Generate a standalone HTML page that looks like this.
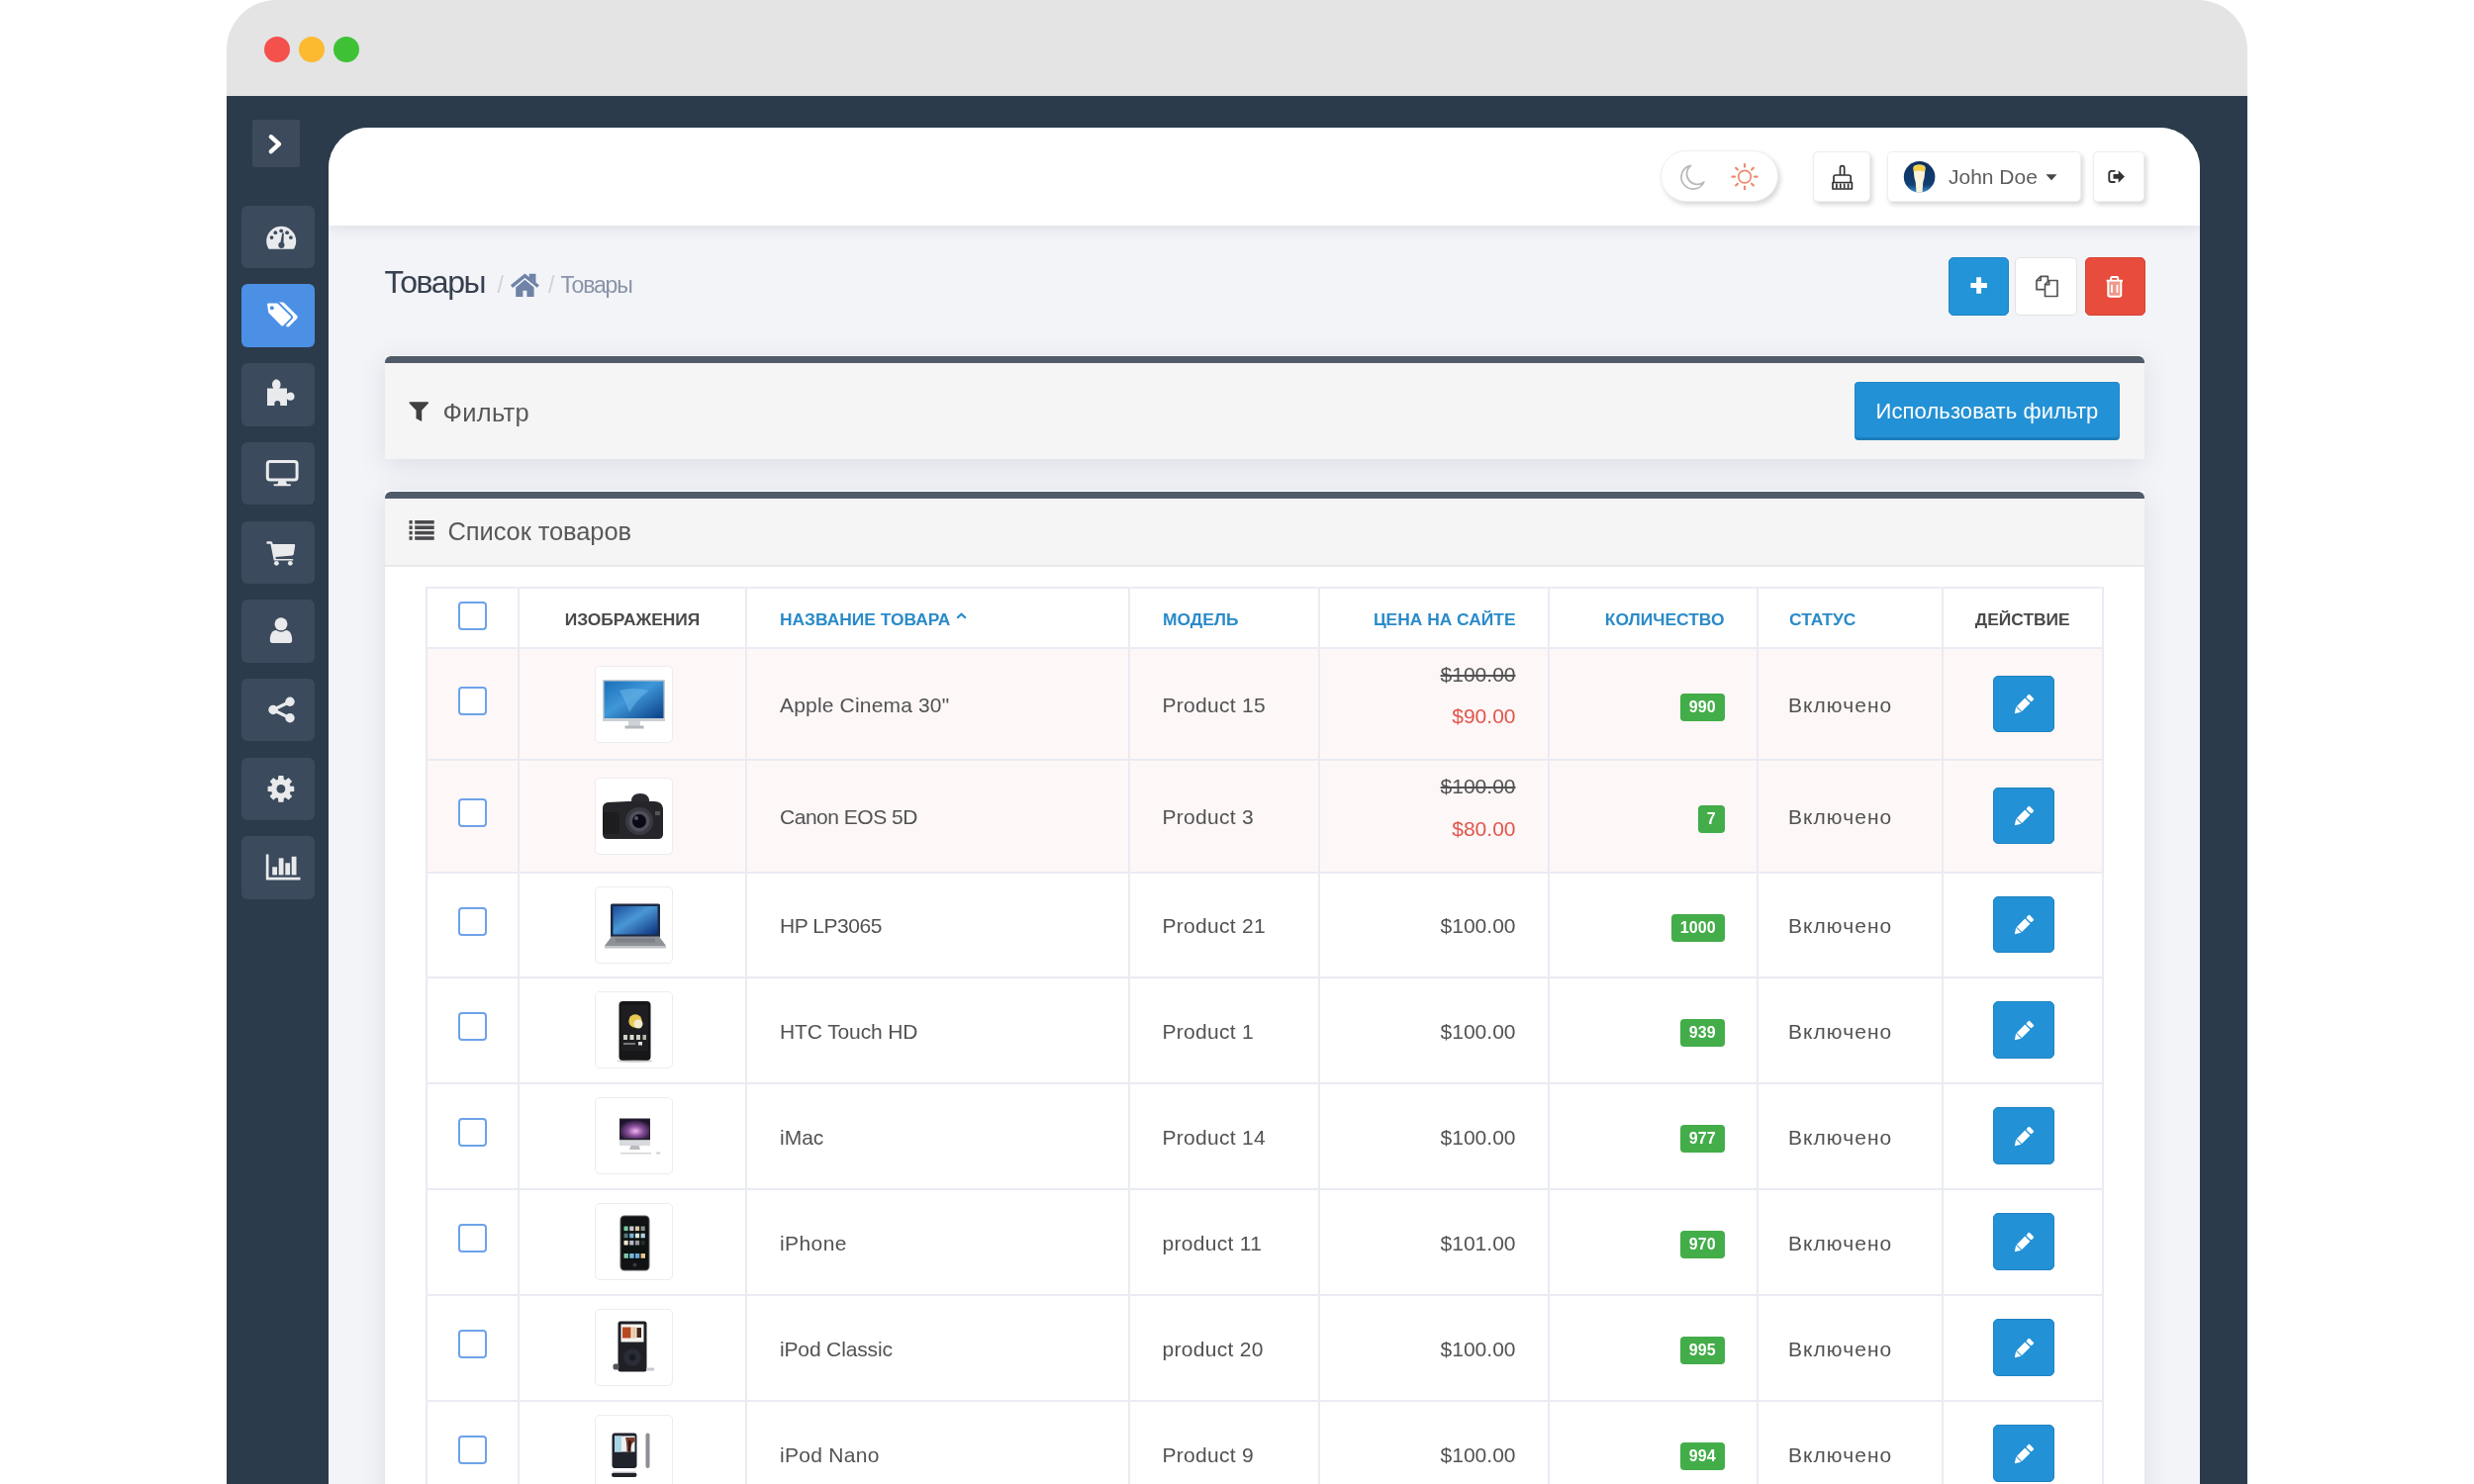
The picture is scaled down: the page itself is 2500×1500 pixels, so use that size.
<!DOCTYPE html>
<html lang="ru">
<head>
<meta charset="utf-8">
<title>Товары</title>
<style>
*{box-sizing:border-box;margin:0;padding:0}
html,body{width:2500px;height:1500px;overflow:hidden;background:#fff}
body{position:relative;font-family:"Liberation Sans",sans-serif;color:#4f4f4f;font-size:21px}
.abs{position:absolute}
/* window */
#win{position:absolute;left:229px;top:0;width:2042px;height:1560px;background:#e4e4e4;border-radius:50px 50px 0 0;overflow:hidden;filter:blur(.75px)}
.dot{position:absolute;top:36.5px;width:26px;height:26px;border-radius:50%}
#app{position:absolute;left:0;top:97.3px;width:2042px;height:1460px;background:#2c3b4c}
/* sidebar */
#tog{position:absolute;left:25.5px;top:24px;width:48px;height:48px;background:#3c4a5b;border-radius:2px}
.sb{position:absolute;left:14.5px;width:74.5px;height:63.5px;background:#3b4a5c;border-radius:6px}
.sb.act{background:#4c90e6}
.sb svg,#tog svg{position:absolute;left:0;top:0;width:100%;height:100%}
/* panel */
#panel{position:absolute;left:103px;top:31.800px;width:1891px;height:1460px;background:#f3f4f8;border-radius:41px 41px 0 0;overflow:hidden}
#hdr{position:absolute;left:0;top:0;width:100%;height:99px;background:#fff;box-shadow:0 2px 14px rgba(60,70,100,.13)}
.hb{position:absolute;top:23.5px;height:51px;background:#fff;border:1px solid #eeeeee;border-radius:5px;box-shadow:2px 3px 5px rgba(0,0,0,.16)}
/* page coords inside panel: subtract (332,129) */
h1{position:absolute;left:56.5px;top:135.9px;font-size:32px;font-weight:400;color:#37404f;letter-spacing:-1.4px;line-height:40px;white-space:nowrap}
.bc{position:absolute;top:146px;font-size:23px;color:#8a93a6;line-height:26px;white-space:nowrap;letter-spacing:-1.17px}
.btn{position:absolute;border-radius:5px}
.card{position:absolute;left:57px;width:1778px;box-shadow:0 6px 26px rgba(70,80,110,.13)}
.card .bar{position:absolute;left:0;top:.5px;width:100%;height:7.9px;background:#505b6a;border-radius:6px 6px 0 0}
.ph{font-size:25.5px;color:#585858;letter-spacing:.1px;white-space:nowrap;line-height:30px}
/* table */
#tbl{position:absolute;left:41px;top:97.1px;width:1695px;border-collapse:collapse;table-layout:fixed}
#tbl td,#tbl th{border:2px solid #eaebf3;vertical-align:middle;white-space:nowrap;overflow:hidden}
#tbl th{height:61.2px;font-size:17.4px;font-weight:700;color:#2a8bc9;text-transform:uppercase;text-align:left;padding:4px 32px 0 33px}
#tbl td{padding:2.6px 32px 0 33px;font-size:21px;color:#525252}
#tbl tr.sp td{background:#fef7f7}
#tbl td.st{letter-spacing:1.05px;padding-left:30.5px}
#tbl td.md{letter-spacing:.3px;padding-left:32.500px}
#tbl td.pr{letter-spacing:0}
.r{text-align:right !important}
.c{text-align:center !important}
.cb{display:block;width:29px;height:29px;border:2.5px solid #6da2ea;border-radius:4px;background:#fff;margin:0 auto;position:relative;top:-3.5px}
.th{display:block;width:78.5px;height:78px;margin:0 auto;left:1.7px;background:#fff;border:1px solid #ececec;border-radius:5px;position:relative;overflow:hidden}
.th svg{position:absolute;left:0;top:0;width:78px;height:78px}
.bd{display:inline-block;height:28px;line-height:28px;padding:0 8.6px 0 8.8px;background:#43ad49;color:#fff;font-size:16px;font-weight:700;border-radius:4px;position:relative;top:1.7px;letter-spacing:.15px}
.ed{display:block;width:62px;height:57.6px;margin:0 auto;background:#2391d5;border-radius:5px;position:relative;left:1px;top:-.3px;border:1px solid #1f83c2}
.ed svg{position:absolute;left:16.1px;top:15.6px;width:27px;height:27px}
.old{display:block;text-decoration:line-through;line-height:26px;margin-bottom:17px;position:relative;top:-9.9px}
.new{display:block;color:#e0564c;line-height:26px;position:relative;top:-10.1px}
</style>
</head>
<body>
<div id="win">
  <div class="dot" style="left:38px;background:#f4514c"></div>
  <div class="dot" style="left:73px;background:#fbba2f"></div>
  <div class="dot" style="left:108px;background:#3fc136"></div>
  <div id="app">
    <div id="tog"><svg viewBox="0 0 48 48" width="48" height="48" ><path d="M18.800 17.200 L27 24.700 L18.800 32.200" fill="none" stroke="#fff" stroke-width="4.300" stroke-linecap="round" stroke-linejoin="round"/></svg></div>
    <div class="sb" style="top:110.5px" id="sb0"><svg viewBox="0 0 74.5 63.5" width="74.5" height="63.5" ><path d="M25.2 35.8a15 15 0 0 1 30 0c0 2.6-.7 5-1.9 7.1q-.5.9-1.6.9h-23q-1.1 0-1.6-.9c-1.2-2.1-1.900-4.5-1.900-7.100z" fill="#e9eaec"/><circle cx="30.5" cy="32.1" r="1.9" fill="#3b4a5c"/><circle cx="34.3" cy="27.2" r="1.9" fill="#3b4a5c"/><circle cx="40.2" cy="25.3" r="1.9" fill="#3b4a5c"/><circle cx="46.1" cy="27.2" r="1.9" fill="#3b4a5c"/><circle cx="49.9" cy="32.1" r="1.9" fill="#3b4a5c"/><path d="M38.6 41.600 L41.300 27.200 L42.800 27.500 L42.400 41.800z" fill="#3b4a5c"/><circle cx="40.4" cy="39.8" r="3.1" fill="#3b4a5c"/></svg></div>
    <div class="sb act" style="top:190.2px" id="sb1"><svg viewBox="0 0 74.5 63.5" width="74.5" height="63.5" ><g transform="translate(30.900 18.600)"><path d="M0 2.2q0-2.200 2.200-2.200h8.300q1.200 0 2.100.9l12.600 12.600q1.500 1.500 0 3l-7.700 7.700q-1.500 1.500-3 0l-12.600-12.600q-.9-.9-.9-2.100z" fill="#fff"/></g><g transform="translate(25.2 18.600)"><path d="M0 2.2q0-2.200 2.200-2.200h8.300q1.200 0 2.100.9l12.600 12.600q1.500 1.500 0 3l-7.700 7.700q-1.500 1.500-3 0l-12.600-12.600q-.9-.9-.9-2.100z" fill="#fff" stroke="#4c90e6" stroke-width="1.800"/><circle cx="5.6" cy="5.600" r="2" fill="#4c90e6"/></g></svg></div>
    <div class="sb" style="top:269.9px" id="sb2"><svg viewBox="0 0 74.5 63.5" width="74.5" height="63.5" ><path d="M26 25.500h6.300q-1.300-1.900-1.300-3.600c0-3 1.900-5.400 4.300-5.400s4.300 2.400 4.300 5.400q0 1.700-1.300 3.600h7.700v5.600q1.600-1.500 3.400-1.500c2.500 0 4.200 1.700 4.200 4.100s-1.700 4.100-4.200 4.100q-1.800 0-3.400-1.500v6.800h-6.800v-2.300q0-2.800-2.900-2.800t-2.900 2.800v2.300h-7.400z" fill="#e9eaec"/></svg></div>
    <div class="sb" style="top:349.6px" id="sb3"><svg viewBox="0 0 74.5 63.5" width="74.5" height="63.5" ><rect x="26.3" y="19.6" width="29.800" height="18.400" rx="2.600" fill="none" stroke="#e9eaec" stroke-width="3"/><path d="M37.500 39h7.400l1 3.200h3.100q1 0 1 1t-1 1h-15.600q-1 0-1-1t1-1h3.100z" fill="#e9eaec"/></svg></div>
    <div class="sb" style="top:429.3px" id="sb4"><svg viewBox="0 0 74.5 63.5" width="74.5" height="63.5" ><path d="M25.500 20.300h4.300q1.200 0 1.500 1.200l.4 1.500h21.300q1.400 0 1.200 1.400l-1.400 8.700q-.2 1.200-1.400 1.300l-17 1.600.4 1.900h16.500q1 0 1 1.100v.6h-19.600l-3.300-16.900h-3.900z" fill="#e9eaec"/><circle cx="35.400" cy="42.300" r="2.400" fill="#e9eaec"/><circle cx="49.300" cy="42.300" r="2.400" fill="#e9eaec"/></svg></div>
    <div class="sb" style="top:509px" id="sb5"><svg viewBox="0 0 74.5 63.5" width="74.5" height="63.5" ><circle cx="40" cy="24.800" r="6.500" fill="#e9eaec"/><path d="M28.800 41.300c0-6.300 2.300-10.300 6.300-10.300q2.300 1.800 4.900 1.800t4.900-1.800c4 0 6.300 4 6.300 10.300q0 2.800-3.200 2.800h-16q-3.200 0-3.200-2.800z" fill="#e9eaec"/></svg></div>
    <div class="sb" style="top:588.7px" id="sb6"><svg viewBox="0 0 74.5 63.5" width="74.5" height="63.5" ><path d="M32 31.500L49 23.200M32 31.500L49 39.900" stroke="#e9eaec" stroke-width="3.200" fill="none"/><circle cx="32" cy="31.500" r="4.700" fill="#e9eaec"/><circle cx="49" cy="23.300" r="4.700" fill="#e9eaec"/><circle cx="49" cy="39.800" r="4.700" fill="#e9eaec"/></svg></div>
    <div class="sb" style="top:668.4px" id="sb7"><svg viewBox="0 0 74.5 63.5" width="74.5" height="63.5" ><polygon points="52.64,29.38 52.64,33.42 49.00,33.74 47.99,36.18 50.34,38.98 47.48,41.84 44.68,39.49 42.24,40.50 41.92,44.14 37.88,44.14 37.56,40.50 35.12,39.49 32.32,41.84 29.46,38.98 31.81,36.18 30.80,33.74 27.16,33.42 27.16,29.38 30.80,29.06 31.81,26.62 29.46,23.82 32.32,20.96 35.12,23.31 37.56,22.30 37.88,18.66 41.92,18.66 42.24,22.30 44.68,23.31 47.48,20.96 50.34,23.82 47.99,26.62 49.00,29.06" fill="#e9eaec" stroke="#e9eaec" stroke-width="1.2" stroke-linejoin="round"/><circle cx="39.9" cy="31.4" r="4.4" fill="#3b4a5c"/></svg></div>
    <div class="sb" style="top:748.1px" id="sb8"><svg viewBox="0 0 74.5 63.5" width="74.5" height="63.5" ><path d="M24.800 18.400h2.700v23.400h32v2.700h-34.700z" fill="#e9eaec"/><rect x="31.200" y="31.300" width="4.800" height="8.100" fill="#e9eaec"/><rect x="37.700" y="22.400" width="4.800" height="17" fill="#e9eaec"/><rect x="44.300" y="27.300" width="4.800" height="12.100" fill="#e9eaec"/><rect x="50.700" y="20.800" width="4.800" height="18.600" fill="#e9eaec"/></svg></div>
    <div id="panel">
      <div id="hdr">
        <div class="hb" id="pill" style="left:1346px;width:119px;height:52px;top:23px;border-radius:26px"><svg viewBox="0 0 119 52" width="119" height="52" style="position:absolute;left:-1px;top:-1px"><path d="M30.500 15.300a12 12 0 1 0 13.400 16.700a10.500 10.500 0 0 1-13.400-16.700z" fill="none" stroke="#b9b9b9" stroke-width="1.700" stroke-linejoin="round"/><circle cx="85" cy="26.600" r="6.300" fill="none" stroke="#ec8a6e" stroke-width="1.700"/><g stroke="#ec8a6e" stroke-width="2.200" stroke-linecap="round"><line x1="95.00" y1="26.60" x2="97.60" y2="26.60"/><line x1="92.07" y1="33.67" x2="93.91" y2="35.51"/><line x1="85.00" y1="36.60" x2="85.00" y2="39.20"/><line x1="77.93" y1="33.67" x2="76.09" y2="35.51"/><line x1="75.00" y1="26.60" x2="72.40" y2="26.60"/><line x1="77.93" y1="19.53" x2="76.09" y2="17.69"/><line x1="85.00" y1="16.60" x2="85.00" y2="14.00"/><line x1="92.07" y1="19.53" x2="93.91" y2="17.69"/></g></svg></div>
        <div class="hb" id="broom" style="left:1499.5px;width:58px"><svg viewBox="0 0 58 51" width="58" height="51" style="position:absolute;left:-1px;top:-1px"><g fill="none" stroke="#333" stroke-width="1.700" stroke-linejoin="round"><path d="M27.500 24v-7.300q0-2 2.100-2t2.100 2v7.300"/><path d="M21 31.500v-5.500q0-2 2-2h13.200q2 0 2 2v5.500"/><path d="M20 31.500h19.400v6.500h-19.400z"/><path d="M23.900 32.500v5M27.800 32.500v5M31.700 32.500v5M35.600 32.500v5"/></g></svg></div>
        <div class="hb" id="user" style="left:1574.5px;width:196px"><svg viewBox="0 0 196 51" width="196" height="51" style="position:absolute;left:-1px;top:-1px"><defs><clipPath id="av"><circle cx="32.600" cy="25.800" r="15.800"/></clipPath><linearGradient id="avg" x1="0" y1="0" x2="0" y2="1"><stop offset="0" stop-color="#0d2f5c"/><stop offset=".75" stop-color="#123f73"/><stop offset="1" stop-color="#3c8fd0"/></linearGradient></defs><circle cx="32.600" cy="25.800" r="15.800" fill="url(#avg)"/><g clip-path="url(#av)"><path d="M26.500 16.500q0-3 6-3t6 3l-.8 9q-.4 3-1.400 5.500l-.8 11h-6l-.8-11q-1-2.500-1.400-5.500z" fill="#fbf3dc"/><path d="M26.500 17q0-3.500 6-3.500t6 3.500l-.3 3.500q-5.700-2-11.400 0z" fill="#f5d04a"/></g><path d="M160.500 23.300h11l-5.500 5.900z" fill="#444"/></svg><span style="position:absolute;left:61.5px;top:11px;font-size:21px;line-height:28px;color:#5e5e5e;letter-spacing:0;white-space:nowrap">John Doe</span></div>
        <div class="hb" id="logout" style="left:1783px;width:52px"><svg viewBox="0 0 52 51" width="52" height="51" style="position:absolute;left:-1px;top:-1px"><g transform="translate(23.6 25.7) scale(.86) translate(-23.6 -25.7)"><path d="M21.500 18.900h-3.400q-3 0-3 3v7q0 3 3 3h3.400" fill="none" stroke="#333" stroke-width="2.200" stroke-linecap="round"/><path d="M20 22.700h6v-4.600l7.300 7.300-7.300 7.300v-4.600h-6z" fill="#333"/></g></svg></div>
      </div>
      <h1>Товары</h1>
      <div class="bc" style="left:170.5px;color:#cfd2db;letter-spacing:0">/</div>
      <div class="abs" style="left:182px;top:146px;width:34px;height:28px"><svg viewBox="0 0 34 28" width="34" height="28" ><g transform="translate(-182 -146)"><path d="M185 160.600L198.400 149.600L204.400 154.500V149.400h3.400v7.900L211.800 160.600" fill="none" stroke="#6f83a7" stroke-width="3.300" stroke-linejoin="miter"/><path d="M189.200 161.400L198.400 153.800L207.600 161.400V171H200.400V164.800H196.400V171H189.200z" fill="#6f83a7"/></g></svg></div>
      <div class="bc" style="left:222px;color:#cfd2db;letter-spacing:0">/</div>
      <div class="bc" style="left:234.5px">Товары</div>
      <div class="btn" id="badd" style="left:1637px;top:131px;width:61px;height:59px;background:#2394d7;border:1px solid #1d84c4"><svg viewBox="0 0 61 59" width="61" height="59" style="position:absolute;left:-1px;top:-1px"><path d="M28.200 20.200h4.900v5.800h5.800v4.900h-5.800v5.900h-4.900v-5.900h-5.800v-4.900h5.800z" fill="#fff"/></svg></div>
      <div class="btn" id="bcopy" style="left:1704px;top:131px;width:63px;height:59px;background:#fff;border:1px solid #e2e2e2"><svg viewBox="0 0 63 59" width="63" height="59" style="position:absolute;left:-1px;top:-1px"><g fill="#fff" stroke="#555" stroke-width="1.700" stroke-linejoin="round"><path d="M22 23.500l4.200-4.200h7.200v13.400h-11.400z"/><path d="M22 23.500h4.200v-4.200" fill="none"/><path d="M30.500 27.700l4.200-4.200h8.300v16h-12.500z"/><path d="M30.500 27.700h4.200v-4.200" fill="none"/></g></svg></div>
      <div class="btn" id="bdel" style="left:1775px;top:131px;width:61px;height:59px;background:#e74c3c;border:1px solid #d64233"><svg viewBox="0 0 61 59" width="61" height="59" style="position:absolute;left:-1px;top:-1px"><g fill="none" stroke="#fff" stroke-width="2"><path d="M21.600 23.700h16.400"/><path d="M26.200 23.300v-2.300q0-1 1-1h5q1 0 1 1v2.300"/><path d="M23.300 24v13.700q0 2 2 2h9q2 0 2-2v-13.700" fill="#f6d6c9" fill-opacity=".55"/><path d="M27 27.800v8M32.500 27.800v8" stroke-width="1.800"/></g></svg></div>

      <div class="card" id="c1" style="top:230px;height:105px;background:#f5f5f6">
        <div class="bar"></div>
        <div class="abs" style="left:23px;top:46px;width:24px;height:24px"><svg viewBox="0 0 24 24" width="24" height="24" ><g transform="translate(-23 -46)"><path d="M25.100 47.200h18.200q1.300.3.500 1.500l-6.600 7v11.300l-5.700-2.900v-8.400l-6.700-7q-.9-1.200.3-1.500z" fill="#404040"/></g></svg></div>
        <div class="ph abs" style="left:58.5px;top:42.6px;letter-spacing:.3px">Фильтр</div>
        <div class="abs" style="left:1485px;top:27px;width:268px;height:58.5px;background:#2391d5;border-radius:4px;color:#fff;font-size:22px;line-height:58px;text-align:center;letter-spacing:.1px;border:1px solid #1f86c8;border-bottom:3px solid #1b7dba">Использовать фильтр</div>
      </div>

      <div class="card" id="c2" style="top:367px;height:1100px;background:#fff">
        <div class="bar"></div>
        <div class="abs" style="left:0;top:9px;width:100%;height:67.5px;background:#f5f5f6;border-bottom:2px solid #e9e9ea"></div>
        <div class="abs" style="left:22px;top:28px;width:30px;height:24px"><svg viewBox="0 0 30 24" width="30" height="24" ><g transform="translate(-22 -28)" fill="#4a4a4e"><rect x="24.500" y="30.0" width="3.200" height="3.600"/><rect x="30.200" y="30.0" width="19.500" height="3.600"/><rect x="24.500" y="35.4" width="3.200" height="3.600"/><rect x="30.200" y="35.4" width="19.500" height="3.600"/><rect x="24.500" y="40.8" width="3.200" height="3.600"/><rect x="30.200" y="40.8" width="19.500" height="3.600"/><rect x="24.500" y="46.2" width="3.200" height="3.600"/><rect x="30.200" y="46.2" width="19.500" height="3.600"/></g></svg></div>
        <div class="ph abs" style="left:63.5px;top:26.2px;letter-spacing:-.1px">Список товаров</div>
        <table id="tbl">
          <colgroup><col style="width:93px"><col style="width:230px"><col style="width:387px"><col style="width:192px"><col style="width:231.5px"><col style="width:211px"><col style="width:187px"><col style="width:162.5px"></colgroup>
          <tr><th class="c" style="padding:0"><span class="cb" style="top:-2.7px"></span></th><th class="c" style="color:#4a4a4a;padding-left:0;padding-right:0">Изображения</th><th>Название товара<svg width="11" height="7" viewBox="0 0 11 7" style="margin-left:5.5px;position:relative;top:-6.5px"><path d="M1.2 5.800L5.500 1.700L9.800 5.800" fill="none" stroke="#2a8bc9" stroke-width="2.200"/></svg></th><th>Модель</th><th class="r">Цена на сайте</th><th class="r">Количество</th><th style="padding-left:31.5px">Статус</th><th class="c" style="color:#4a4a4a;padding-left:0;padding-right:0">Действие</th></tr>
<tr class="sp" style="height:112.6px"><td style="padding:0"><span class="cb"></span></td><td style="padding:0"><span class="th"><svg viewBox="0 0 78 78" width="78" height="78" ><defs><linearGradient id="g1" x1="0" y1="0" x2="1" y2="1"><stop offset="0" stop-color="#1b6fb8"/><stop offset=".45" stop-color="#3f97d8"/><stop offset="1" stop-color="#0a3f86"/></linearGradient></defs><rect x="7" y="13" width="63" height="42" fill="#c9ced4"/><rect x="8.500" y="14.500" width="60" height="37.500" fill="url(#g1)"/><path d="M24 24q14-4 30 0-12 8-20 22-4-12-10-22z" fill="#6cb6ea" opacity=".55"/><rect x="33" y="55" width="12" height="5" fill="#cfd2d6"/><rect x="29.500" y="59.500" width="19" height="3" fill="#b5b8bc"/></svg></span></td><td class="nm" style="font-size:21px;letter-spacing:0.175px">Apple Cinema 30"</td><td class="md">Product 15</td><td class="r pr"><span class="old">$100.00</span><span class="new">$90.00</span></td><td class="r"><span class="bd">990</span></td><td class="st">Включено</td><td style="padding:0"><span class="ed"><svg viewBox="0 0 22 22" width="22" height="22" ><g transform="rotate(45 11 11)" fill="#fff"><rect x="8" y="1.200" width="6" height="3.600" rx="1"/><rect x="8" y="6" width="6" height="9.600"/><path d="M8 16.400h6l-3 4.600z"/></g></svg></span></td></tr>
<tr class="sp" style="height:113.8px"><td style="padding:0"><span class="cb"></span></td><td style="padding:0"><span class="th"><svg viewBox="0 0 78 78" width="78" height="78" ><path d="M36 23q0-8 9-8t9 8v3h-18z" fill="#2b2b2f"/><path d="M7 30q0-5 5-6l21-1h26q8 0 9 7v26q0 5-5 5h-51q-5 0-5-5z" fill="#26262a"/><rect x="7" y="34" width="17" height="22" rx="3" fill="#1d1d20"/><circle cx="44" cy="43" r="14" fill="#3a3a42"/><circle cx="44" cy="43" r="10.500" fill="#50505c"/><circle cx="44" cy="43" r="7" fill="#0a0914"/><circle cx="41" cy="40" r="2" fill="#55556a"/><rect x="60" y="33" width="5" height="4" fill="#555"/></svg></span></td><td class="nm" style="font-size:21px;letter-spacing:-0.48px">Canon EOS 5D</td><td class="md">Product 3</td><td class="r pr"><span class="old">$100.00</span><span class="new">$80.00</span></td><td class="r"><span class="bd">7</span></td><td class="st">Включено</td><td style="padding:0"><span class="ed"><svg viewBox="0 0 22 22" width="22" height="22" ><g transform="rotate(45 11 11)" fill="#fff"><rect x="8" y="1.200" width="6" height="3.600" rx="1"/><rect x="8" y="6" width="6" height="9.600"/><path d="M8 16.400h6l-3 4.600z"/></g></svg></span></td></tr>
<tr style="height:106.3px"><td style="padding:0"><span class="cb"></span></td><td style="padding:0"><span class="th"><svg viewBox="0 0 78 78" width="78" height="78" ><defs><linearGradient id="g2" x1="0" y1="0" x2="1" y2="1"><stop offset="0" stop-color="#1a4c9a"/><stop offset=".45" stop-color="#4a97d6"/><stop offset="1" stop-color="#0c2f7a"/></linearGradient></defs><rect x="15" y="16.500" width="50" height="34" rx="1.500" fill="#1c2a44"/><rect x="17.500" y="19" width="45" height="28.500" fill="url(#g2)"/><path d="M9 59l7-9.500h48l7 9.500z" fill="#8e9196"/><rect x="9" y="59" width="62" height="2.500" fill="#bfc2c6"/><rect x="20" y="51.500" width="40" height="4" fill="#7d8086"/></svg></span></td><td class="nm" style="font-size:21px;letter-spacing:-0.44px">HP LP3065</td><td class="md">Product 21</td><td class="r pr">$100.00</td><td class="r"><span class="bd">1000</span></td><td class="st">Включено</td><td style="padding:0"><span class="ed"><svg viewBox="0 0 22 22" width="22" height="22" ><g transform="rotate(45 11 11)" fill="#fff"><rect x="8" y="1.200" width="6" height="3.600" rx="1"/><rect x="8" y="6" width="6" height="9.600"/><path d="M8 16.400h6l-3 4.600z"/></g></svg></span></td></tr>
<tr style="height:106.8px"><td style="padding:0"><span class="cb"></span></td><td style="padding:0"><span class="th"><svg viewBox="0 0 78 78" width="78" height="78" ><rect x="23.500" y="9" width="32" height="60" rx="4" fill="#17171a"/><rect x="26" y="13" width="27" height="46" fill="#1e1e22"/><circle cx="40" cy="29" r="6.700" fill="#e9c851"/><circle cx="43" cy="32" r="4.500" fill="#f3ead0"/><rect x="28" y="43" width="4" height="5" fill="#cfcfc8"/><rect x="34.500" y="43" width="4" height="5" fill="#dcdcd4"/><rect x="41" y="43" width="4" height="5" fill="#cfcfc8"/><rect x="47.500" y="43" width="3.500" height="5" fill="#b8b8a8"/><rect x="28" y="51" width="12" height="2" fill="#777"/><rect x="43" y="50" width="4" height="3.500" fill="#ddd"/><ellipse cx="39.500" cy="69.500" rx="18" ry="1.500" fill="#999" opacity=".5"/></svg></span></td><td class="nm" style="font-size:21px;letter-spacing:-0.12px">HTC Touch HD</td><td class="md">Product 1</td><td class="r pr">$100.00</td><td class="r"><span class="bd">939</span></td><td class="st">Включено</td><td style="padding:0"><span class="ed"><svg viewBox="0 0 22 22" width="22" height="22" ><g transform="rotate(45 11 11)" fill="#fff"><rect x="8" y="1.200" width="6" height="3.600" rx="1"/><rect x="8" y="6" width="6" height="9.600"/><path d="M8 16.400h6l-3 4.600z"/></g></svg></span></td></tr>
<tr style="height:107px"><td style="padding:0"><span class="cb"></span></td><td style="padding:0"><span class="th"><svg viewBox="0 0 78 78" width="78" height="78" ><defs><radialGradient id="g3" cx=".52" cy=".62" r=".6"><stop offset="0" stop-color="#f2b6ee"/><stop offset=".45" stop-color="#8a4f9c"/><stop offset="1" stop-color="#1f1430"/></radialGradient></defs><rect x="24" y="20.500" width="31" height="22" fill="#2a2230"/><rect x="25" y="21.500" width="29" height="19" fill="url(#g3)"/><rect x="24" y="42.500" width="31" height="5.500" fill="#d9dadd"/><path d="M35.500 48h8l1.500 4h-11z" fill="#b9babd"/><rect x="25" y="55" width="31" height="1.500" fill="#d5d5d8"/><rect x="61" y="54.500" width="4.500" height="2" rx="1" fill="#d0d0d4"/></svg></span></td><td class="nm" style="font-size:21px;letter-spacing:0px">iMac</td><td class="md">Product 14</td><td class="r pr">$100.00</td><td class="r"><span class="bd">977</span></td><td class="st">Включено</td><td style="padding:0"><span class="ed"><svg viewBox="0 0 22 22" width="22" height="22" ><g transform="rotate(45 11 11)" fill="#fff"><rect x="8" y="1.200" width="6" height="3.600" rx="1"/><rect x="8" y="6" width="6" height="9.600"/><path d="M8 16.400h6l-3 4.600z"/></g></svg></span></td></tr>
<tr style="height:107px"><td style="padding:0"><span class="cb"></span></td><td style="padding:0"><span class="th"><svg viewBox="0 0 78 78" width="78" height="78" ><rect x="24.500" y="11.500" width="30" height="56" rx="4.500" fill="#5b5b5e"/><rect x="25.500" y="12.500" width="28" height="54" rx="4" fill="#111214"/><rect x="27.500" y="20" width="24" height="37" fill="#0b1210"/><rect x="28.5" y="22.5" width="4.200" height="4.600" fill="#79c9a0"/><rect x="34.2" y="22.5" width="4.200" height="4.600" fill="#cfc6d6"/><rect x="39.9" y="22.5" width="4.200" height="4.600" fill="#d9c9a0"/><rect x="45.6" y="22.5" width="4.200" height="4.600" fill="#8b8b86"/><rect x="28.5" y="29.7" width="4.200" height="4.600" fill="#55727a"/><rect x="34.2" y="29.7" width="4.200" height="4.600" fill="#7eb4d8"/><rect x="39.9" y="29.7" width="4.200" height="4.600" fill="#d9e9d8"/><rect x="45.6" y="29.7" width="4.200" height="4.600" fill="#b4cfe4"/><rect x="28.5" y="36.9" width="4.200" height="4.600" fill="#f0e6d0"/><rect x="34.2" y="36.9" width="4.200" height="4.600" fill="#b9b4d0"/><rect x="39.9" y="36.9" width="4.200" height="4.600" fill="#9a9a98"/><rect x="45.6" y="36.9" width="4.200" height="4.600" fill="#2a2a2c"/><rect x="28.5" y="50" width="4.400" height="4.800" fill="#7ec8a4"/><rect x="34.2" y="50" width="4.400" height="4.800" fill="#78b8e0"/><rect x="39.9" y="50" width="4.400" height="4.800" fill="#6aa8d8"/><rect x="45.6" y="50" width="4.400" height="4.800" fill="#e6c684"/><circle cx="39.500" cy="61.500" r="2" fill="#3a3a3c"/></svg></span></td><td class="nm" style="font-size:21px;letter-spacing:0.4px">iPhone</td><td class="md">product 11</td><td class="r pr">$101.00</td><td class="r"><span class="bd">970</span></td><td class="st">Включено</td><td style="padding:0"><span class="ed"><svg viewBox="0 0 22 22" width="22" height="22" ><g transform="rotate(45 11 11)" fill="#fff"><rect x="8" y="1.200" width="6" height="3.600" rx="1"/><rect x="8" y="6" width="6" height="9.600"/><path d="M8 16.400h6l-3 4.600z"/></g></svg></span></td></tr>
<tr style="height:107px"><td style="padding:0"><span class="cb"></span></td><td style="padding:0"><span class="th"><svg viewBox="0 0 78 78" width="78" height="78" ><rect x="22.500" y="11.500" width="29" height="51" rx="2.500" fill="#1f2026"/><rect x="25.500" y="14.500" width="23" height="18" fill="#f4f2ee"/><rect x="27" y="17.500" width="8.500" height="11" fill="#b8481f"/><rect x="36.500" y="17.500" width="4" height="11" fill="#e8c9a0"/><rect x="41.500" y="18" width="4.500" height="10" fill="#4a2418"/><circle cx="37" cy="48" r="8.800" fill="#2a2c36"/><circle cx="37" cy="48" r="3.200" fill="#1a1b22"/><rect x="17.500" y="54.500" width="6" height="6" rx="2" fill="#55565c"/><rect x="51" y="58.500" width="8" height="3" fill="#c9c9cc"/></svg></span></td><td class="nm" style="font-size:21px;letter-spacing:-0.15px">iPod Classic</td><td class="md">product 20</td><td class="r pr">$100.00</td><td class="r"><span class="bd">995</span></td><td class="st">Включено</td><td style="padding:0"><span class="ed"><svg viewBox="0 0 22 22" width="22" height="22" ><g transform="rotate(45 11 11)" fill="#fff"><rect x="8" y="1.200" width="6" height="3.600" rx="1"/><rect x="8" y="6" width="6" height="9.600"/><path d="M8 16.400h6l-3 4.600z"/></g></svg></span></td></tr>
<tr style="height:107px"><td style="padding:0"><span class="cb"></span></td><td style="padding:0"><span class="th"><svg viewBox="0 0 78 78" width="78" height="78" ><rect x="16.500" y="17.500" width="25" height="35.500" rx="3" fill="#20232c"/><rect x="19" y="20.500" width="20.500" height="16" fill="#eaf0f2"/><rect x="19" y="20.500" width="7" height="16" fill="#a9d6e4"/><path d="M30 22h9.500v4q-4 1-5 10.500h-3q0-9-1.500-14.500z" fill="#7a3a2a"/><rect x="33" y="25" width="2.500" height="11.500" fill="#3a1410"/><rect x="50.500" y="17.500" width="4" height="35.500" rx="2" fill="#8d8f94"/><rect x="16" y="57.500" width="25.500" height="4.500" rx="2.200" fill="#22242a"/><rect x="17" y="56.300" width="23.500" height="1.200" fill="#d9d9dc"/></svg></span></td><td class="nm" style="font-size:21px;letter-spacing:0.3px">iPod Nano</td><td class="md">Product 9</td><td class="r pr">$100.00</td><td class="r"><span class="bd">994</span></td><td class="st">Включено</td><td style="padding:0"><span class="ed"><svg viewBox="0 0 22 22" width="22" height="22" ><g transform="rotate(45 11 11)" fill="#fff"><rect x="8" y="1.200" width="6" height="3.600" rx="1"/><rect x="8" y="6" width="6" height="9.600"/><path d="M8 16.400h6l-3 4.600z"/></g></svg></span></td></tr>
        </table>
      </div>
    </div>
  </div>
</div>
</body>
</html>
